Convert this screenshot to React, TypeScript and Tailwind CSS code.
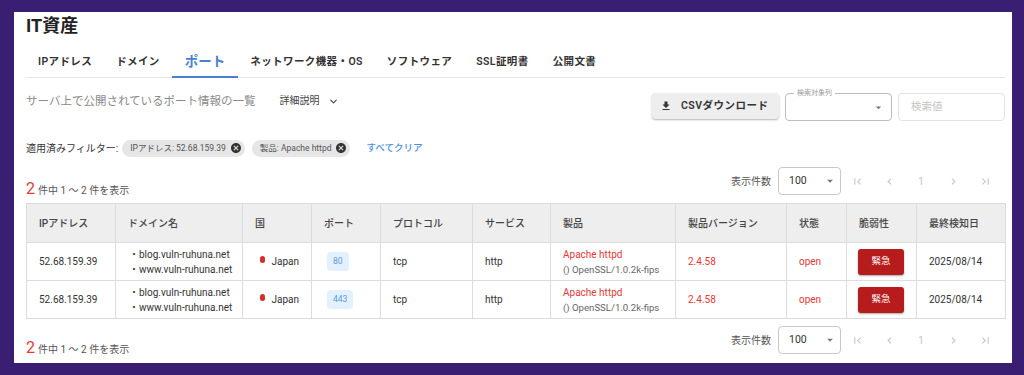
import { ChevronDown } from "lucide-react";

const tabs = ["IPアドレス", "ドメイン", "ポート", "ネットワーク機器・OS", "ソフトウェア", "SSL証明書", "公開文書"];

const cols = [
  { label: "IPアドレス", w: 89 },
  { label: "ドメイン名", w: 127 },
  { label: "国", w: 69 },
  { label: "ポート", w: 69 },
  { label: "プロトコル", w: 92 },
  { label: "サービス", w: 78 },
  { label: "製品", w: 125 },
  { label: "製品バージョン", w: 111 },
  { label: "状態", w: 60 },
  { label: "脆弱性", w: 70 },
  { label: "最終検知日", w: 89 },
];

const rows = [
  { ip: "52.68.159.39", port: "80" },
  { ip: "52.68.159.39", port: "443" },
];

function Icon({ d, className }: { d: string; className?: string }) {
  return (
    <svg viewBox="0 0 24 24" className={className} fill="currentColor">
      <path d={d} />
    </svg>
  );
}

const CANCEL =
  "M12 2C6.47 2 2 6.47 2 12s4.47 10 10 10 10-4.47 10-10S17.53 2 12 2zm5 13.59L15.59 17 12 13.41 8.41 17 7 15.59 10.59 12 7 8.41 8.41 7 12 10.59 15.59 7 17 8.41 13.41 12 17 15.59z";
const DROP = "M7 10l5 5 5-5z";

function Pager() {
  const btn = "w-[32px] h-[28px] flex items-center justify-center text-[#c4c4c4]";
  return (
    <div className="flex items-center h-[28px] pr-[4px]">
      <span className="text-[10px] text-[#555] mr-[7px]">表示件数</span>
      <div className="w-[63px] h-[28px] border border-[#c8c8c8] rounded-[4px] flex items-center justify-between pl-[10px] pr-[3px] text-[10.5px] text-[#333]">
        100
        <Icon d={DROP} className="w-[14px] h-[14px] text-[#777]" />
      </div>
      <div className={btn}>
        <Icon d="M18.41 16.59L13.82 12l4.59-4.59L17 6l-6 6 6 6zM6 6h2v12H6z" className="w-[13px] h-[13px]" />
      </div>
      <div className={btn}>
        <Icon d="M15.41 7.41L14 6l-6 6 6 6 1.41-1.41L10.83 12z" className="w-[13px] h-[13px]" />
      </div>
      <div className={btn + " text-[10px]"}>1</div>
      <div className={btn}>
        <Icon d="M10 6L8.59 7.41 13.17 12l-4.58 4.59L10 18l6-6z" className="w-[13px] h-[13px]" />
      </div>
      <div className={btn}>
        <Icon d="M5.59 7.41L10.18 12l-4.59 4.59L7 18l6-6-6-6zM16 6h2v12h-2z" className="w-[13px] h-[13px]" />
      </div>
    </div>
  );
}

function Count() {
  return (
    <div className="self-end leading-[16px] text-[10px] text-[#555]">
      <span className="text-[16px] text-[#e53935] mr-[3px]">2</span>件中 1 〜 2 件を表示
    </div>
  );
}

export default function App() {
  return (
    <div className="w-[1024px] h-[375px] bg-[#3a1e72] pt-[12px] pl-[14px] pr-[12px] font-[Roboto,'Noto_Sans_CJK_JP',sans-serif]">
      <div className="h-[351px] bg-white pl-3 pr-[7px] pt-[2px] overflow-hidden">
        <h1 className="h-[24px] leading-[24px] text-[18px] font-bold text-[#222]">IT資産</h1>

        <div className="mt-[8px] flex border-b border-[#e6e6e6] h-[32px]">
          {tabs.map((t) => (
            <div
              key={t}
              className={
                t === "ポート"
                  ? "px-[13px] flex items-center text-[13.5px] font-bold text-[#4a80d4] border-b-2 border-[#4a80d4] mb-[-1px]"
                  : "px-3 flex items-center text-[10.5px] font-semibold text-[#333] tracking-[0.4px]"
              }
            >
              {t}
            </div>
          ))}
        </div>

        <div className="mt-[15px] flex justify-between h-[28px]">
          <div className="flex items-start leading-[16px]">
            <span className="text-[11.5px] text-[#8a8a8a]">サーバ上で公開されているポート情報の一覧</span>
            <span className="ml-[24px] text-[10px] text-[#444] flex items-center">
              詳細説明
              <ChevronDown className="w-[11px] h-[11px] ml-[8px]" strokeWidth={2.5} />
            </span>
          </div>
          <div className="flex gap-[6px]">
            <button className="w-[127px] h-[26px] bg-[#eeeeee] rounded-[4px] shadow-[0_1px_2px_rgba(0,0,0,0.3)] flex items-center pl-[8px] text-[10.5px] font-semibold text-[#333] tracking-[0.5px]">
              <Icon d="M19 9h-4V3H9v6H5l7 7 7-7zM5 18v2h14v-2H5z" className="w-[12px] h-[12px] mr-[9px]" />
              CSVダウンロード
            </button>
            <div className="relative w-[107px] h-[28px] border border-[#bdbdbd] rounded-[4px] flex items-center justify-end pr-[6px]">
              <span className="absolute left-[8px] top-[-6px] bg-white px-[3px] text-[7px] leading-[10px] text-[#999]">検索対象列</span>
              <Icon d={DROP} className="w-[13px] h-[13px] text-[#777]" />
            </div>
            <div className="w-[107px] h-[28px] border border-[#e3e3e3] rounded-[4px] flex items-center pl-[12px] text-[10.5px] text-[#c4c4c4]">
              検索値
            </div>
          </div>
        </div>

        <div className="mt-[18px] flex items-center h-[18px]">
          <span className="text-[10px] text-[#333] mr-[4px]">適用済みフィルター:</span>
          <span className="h-[17px] bg-[#e6e6e6] rounded-full flex items-center pl-[8px] pr-[3px] text-[8.5px] text-[#555]">
            IPアドレス: 52.68.159.39
            <Icon d={CANCEL} className="w-[12px] h-[12px] text-[#333] ml-[4px]" />
          </span>
          <span className="ml-[7px] h-[17px] bg-[#e6e6e6] rounded-full flex items-center pl-[8px] pr-[3px] text-[8.5px] text-[#555]">
            製品: Apache httpd
            <Icon d={CANCEL} className="w-[12px] h-[12px] text-[#333] ml-[4px]" />
          </span>
          <span className="ml-[16px] text-[9.5px] font-medium text-[#4a90e2]">すべてクリア</span>
        </div>

        <div className="mt-[10px] flex justify-between h-[32px]">
          <Count />
          <Pager />
        </div>

        <table className="mt-[4px] table-fixed border-collapse w-[979px] text-[10px] text-[#333] whitespace-nowrap">
          <colgroup>
            {cols.map((c) => (
              <col key={c.label} style={{ width: c.w }} />
            ))}
          </colgroup>
          <thead>
            <tr className="h-[39px] bg-[#eeeeee]">
              {cols.map((c) => (
                <th key={c.label} className="border border-[#dcdcdc] px-3 text-left font-medium text-[10px] text-[#444]">
                  {c.label}
                </th>
              ))}
            </tr>
          </thead>
          <tbody>
            {rows.map((r) => (
              <tr key={r.port} className="h-[38px]">
                <td className="border border-[#dcdcdc] px-3">{r.ip}</td>
                <td className="border border-[#dcdcdc] pl-[13px] leading-[15px]">
                  <div>・blog.vuln-ruhuna.net</div>
                  <div>・www.vuln-ruhuna.net</div>
                </td>
                <td className="border border-[#dcdcdc] px-3">
                  <div className="flex items-center pl-[5px]">
                    <span className="w-[7px] h-[7px] rounded-full bg-[#d32f2f] mb-[4px] mr-[6px]" />
                    Japan
                  </div>
                </td>
                <td className="border border-[#dcdcdc] pl-[15px]">
                  <span className="inline-flex items-center justify-center h-[19px] px-[6px] rounded-[4px] bg-[#e3f0fd] text-[8.5px] text-[#5a9be0]">
                    {r.port}
                  </span>
                </td>
                <td className="border border-[#dcdcdc] px-3">tcp</td>
                <td className="border border-[#dcdcdc] px-3">http</td>
                <td className="border border-[#dcdcdc] pl-3 pr-0 leading-[15px]">
                  <div className="text-[#e53935]">Apache httpd</div>
                  <div className="text-[#666] text-[9.6px]">() OpenSSL/1.0.2k-fips</div>
                </td>
                <td className="border border-[#dcdcdc] px-3 text-[#e53935]">2.4.58</td>
                <td className="border border-[#dcdcdc] px-3 text-[#e53935]">open</td>
                <td className="border border-[#dcdcdc] pl-[11px]">
                  <span className="inline-flex items-center justify-center w-[46px] h-[26px] rounded-[3px] bg-[#b71c1c] text-white text-[9.5px] shadow-[0_1px_2px_rgba(0,0,0,0.35)]">
                    緊急
                  </span>
                </td>
                <td className="border border-[#dcdcdc] px-3">2025/08/14</td>
              </tr>
            ))}
          </tbody>
        </table>

        <div className="mt-[7px] flex justify-between h-[32px]">
          <Count />
          <Pager />
        </div>
      </div>
    </div>
  );
}
